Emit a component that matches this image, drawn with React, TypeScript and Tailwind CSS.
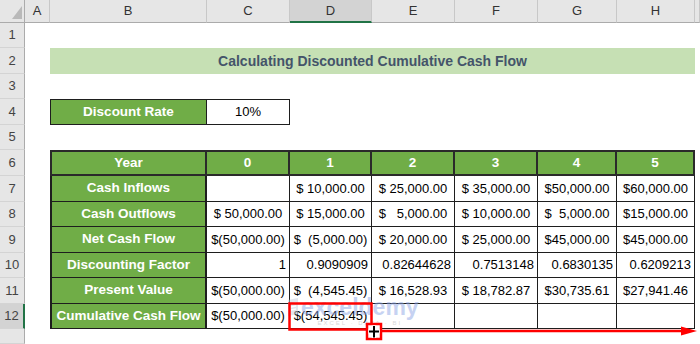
import React from 'react';

const font = { fontFamily: '"Liberation Sans", Arial, sans-serif' };

const letters = ['A', 'B', 'C', 'D', 'E', 'F', 'G', 'H', ''];

const tableRows: { label: string; vals: string[]; right?: boolean }[] = [
  { label: 'Cash Inflows', vals: ['', '$ 10,000.00', '$ 25,000.00', '$ 35,000.00', '$50,000.00', '$60,000.00'] },
  { label: 'Cash Outflows', vals: ['$ 50,000.00', '$ 15,000.00', '$   5,000.00', '$ 10,000.00', '$  5,000.00', '$15,000.00'] },
  { label: 'Net Cash Flow', vals: ['$(50,000.00)', '$  (5,000.00)', '$ 20,000.00', '$ 25,000.00', '$45,000.00', '$45,000.00'] },
  { label: 'Discounting Factor', vals: ['1', '0.9090909', '0.82644628', '0.7513148', '0.6830135', '0.6209213'], right: true },
  { label: 'Present Value', vals: ['$(50,000.00)', '$  (4,545.45)', '$ 16,528.93', '$ 18,782.87', '$30,735.61', '$27,941.46'] },
  { label: 'Cumulative Cash Flow', vals: ['$(50,000.00)', '$(54,545.45)', '', '', '', ''] },
];

const RowHead = ({ n, active }: { n?: number; active?: boolean }) => (
  <div
    className={`flex items-center justify-center text-[13px] text-[#444] border-b border-[#d4d4d4] ${
      active ? 'bg-[#d3d3d3] border-r-2 border-r-[#217346]' : 'bg-[#e6e6e6] border-r border-r-[#ababab]'
    }`}
  >
    {n}
  </div>
);

const Empty = ({ count }: { count: number }) => (
  <>
    {Array.from({ length: count }).map((_, i) => (
      <div key={i} className="bg-white" />
    ))}
  </>
);

export default function App() {
  return (
    <div className="relative w-[700px] h-[344px] overflow-hidden bg-white" style={font}>
      <div className="grid h-[344px] grid-cols-[25px_25px_157px_83px_82px_83px_83px_79px_78px_1fr] grid-rows-[23px_25px_26px_25px_26px_25px_26px_26px_25px_26px_25px_26px_25px_1fr]">
        {/* column headers */}
        <div className="relative bg-[#e6e6e6] border-r border-b border-[#ababab]">
          <svg className="absolute left-[12px] top-[6px]" width="10" height="13" viewBox="0 0 10 13">
            <polygon points="10,0 10,13 0,13" fill="#b9b9b9" />
          </svg>
        </div>
        {letters.map((l, i) => (
          <div
            key={i}
            className={`flex items-center justify-center text-[13px] text-[#333] border-r border-r-[#c8c8c8] ${
              l === 'D' ? 'bg-[#d3d3d3] border-b-2 border-b-[#217346]' : 'bg-[#e6e6e6] border-b border-b-[#ababab]'
            }`}
          >
            {l}
          </div>
        ))}

        {/* row 1 */}
        <RowHead n={1} />
        <Empty count={9} />

        {/* row 2 title */}
        <RowHead n={2} />
        <div className="bg-white" />
        <div className="col-span-7 flex items-center justify-center bg-[#c6e0b4] text-[14px] font-bold text-[#44546a]">
          Calculating Discounted Cumulative Cash Flow
        </div>
        <div className="bg-white" />

        {/* row 3 */}
        <RowHead n={3} />
        <Empty count={9} />

        {/* row 4 */}
        <RowHead n={4} />
        <div className="bg-white" />
        <div className="flex items-center justify-center bg-[#70ad47] border border-[#1e1e1e] text-[13.5px] font-bold text-white">
          Discount Rate
        </div>
        <div className="flex items-center justify-center bg-white border-y border-r border-[#1e1e1e] text-[13px] text-black">
          10%
        </div>
        <Empty count={6} />

        {/* row 5 */}
        <RowHead n={5} />
        <Empty count={9} />

        {/* row 6 header */}
        <RowHead n={6} />
        <div className="bg-white" />
        <div className="flex items-center justify-center bg-[#70ad47] border-2 border-[#2a2a2a] text-[13.5px] font-bold text-white">
          Year
        </div>
        {['0', '1', '2', '3', '4', '5'].map((y) => (
          <div
            key={y}
            className="flex items-center justify-center bg-[#70ad47] border-y-2 border-r-2 border-[#2a2a2a] text-[13.5px] font-bold text-white"
          >
            {y}
          </div>
        ))}
        <div className="bg-white" />

        {/* rows 7-12 */}
        {tableRows.map((r, ri) => (
          <React.Fragment key={r.label}>
            <RowHead n={7 + ri} active={ri === 5} />
            <div className="bg-white" />
            <div className="flex items-center justify-center bg-[#70ad47] border-l-2 border-r-2 border-b border-[#1e1e1e] text-[13.5px] font-bold text-white whitespace-nowrap">
              {r.label}
            </div>
            {r.vals.map((v, vi) => (
              <div
                key={vi}
                className={`flex items-center bg-white border-r border-b border-[#1e1e1e] text-[13px] text-black whitespace-pre ${
                  r.right ? 'justify-end pr-[3px]' : 'justify-center'
                }`}
              >
                {v}
              </div>
            ))}
            <div className="bg-white" />
          </React.Fragment>
        ))}

        {/* row 13 (partial) */}
        <RowHead />
        <Empty count={9} />
      </div>

      {/* watermark */}
      <div className="pointer-events-none absolute left-[287px] top-[295px] flex items-start gap-[2px] opacity-50">
        <svg width="12" height="18" viewBox="0 0 12 18" className="mt-[3px]">
          <path d="M1 2 L11 0 L11 16 L1 18 Z" fill="#c9cfdc" />
          <path d="M4 6 L9 5 M4 9 L9 8 M4 12 L9 11" stroke="#ffffff" strokeWidth="1.5" />
        </svg>
        <div className="flex flex-col items-center">
          <span className="text-[23px] leading-[24px] font-bold text-[#8ea6e6]">exceldemy</span>
          <span className="text-[6px] leading-[8px] tracking-[2px] text-[#b5b5b5]">EXCEL · DATA · BI</span>
        </div>
      </div>

      {/* annotations */}
      <svg className="pointer-events-none absolute left-0 top-0" width="700" height="344" viewBox="0 0 700 344">
        <rect x="289.5" y="303.5" width="82" height="26" fill="none" stroke="#ff0000" strokeWidth="2.5" />
        <line x1="382" y1="331" x2="684" y2="331" stroke="#ff0000" strokeWidth="2.5" />
        <polygon points="681,326.5 697,331 681,335.5" fill="#ff0000" />
        <rect x="367" y="324" width="14" height="15" fill="#ffffff" stroke="#ff0000" strokeWidth="2.5" />
        <line x1="374" y1="325.5" x2="374" y2="338" stroke="#ffffff" strokeWidth="4.5" />
        <line x1="368.5" y1="331.5" x2="379.5" y2="331.5" stroke="#ffffff" strokeWidth="4.5" />
        <line x1="374" y1="326" x2="374" y2="337.5" stroke="#000000" strokeWidth="2" />
        <line x1="369" y1="331.5" x2="379" y2="331.5" stroke="#000000" strokeWidth="2" />
      </svg>
    </div>
  );
}
